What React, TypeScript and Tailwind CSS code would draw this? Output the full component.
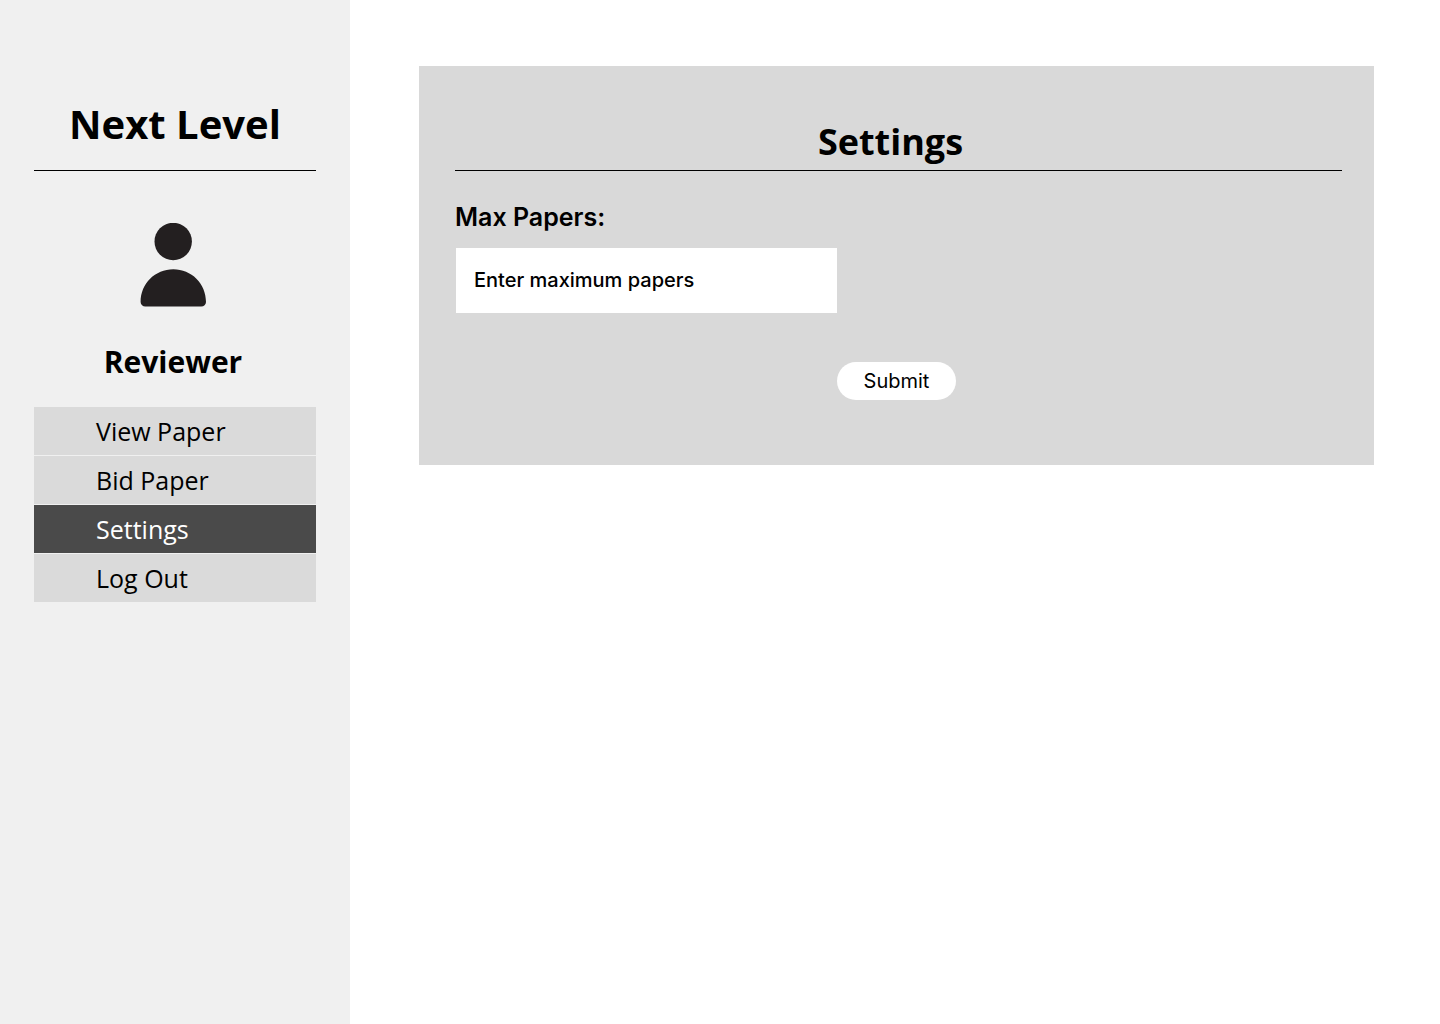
const navItems = ["View Paper", "Bid Paper", "Settings", "Log Out"];

function PersonIcon() {
  return (
    <svg className="h-[84px] w-[66px]" viewBox="0 0 66 84" aria-hidden="true">
      <circle cx="33.200" cy="18.500" r="18.700" fill="#231f20" />
      <path
        d="M0.600 79C0.600 60.500 15.200 46.200 33.300 46.200S66 60.500 66 79A4.700 4.700 0 0 1 61.300 83.600H5.300A4.700 4.700 0 0 1 0.600 79Z"
        fill="#231f20"
      />
    </svg>
  );
}

function Sidebar() {
  return (
    <aside className="w-[350px] shrink-0 bg-[#f0f0f0] px-[34px] pt-24 font-['Open_Sans',sans-serif] text-black">
      <div className="border-b border-black pb-[18px] text-center text-[40px] leading-14 font-bold">
        Next Level
      </div>
      <div className="mt-[52px] flex flex-col items-center pr-1">
        <PersonIcon />
        <h2 className="mt-[31px] text-[30px] leading-12 font-bold">Reviewer</h2>
      </div>
      <nav className="mt-[21px] flex flex-col gap-px">
        {navItems.map((item) => (
          <a
            key={item}
            href="#"
            aria-current={item === "Settings" ? "page" : undefined}
            className="flex h-12 items-center bg-[#dadada] pl-[62px] text-[25px] leading-8 aria-[current=page]:bg-[#4a4a4a] aria-[current=page]:text-white"
          >
            {item}
          </a>
        ))}
      </nav>
    </aside>
  );
}

export default function App() {
  return (
    <div className="flex min-h-screen bg-white">
      <Sidebar />
      <main className="min-w-0 flex-1 pt-[66px] pr-[66px] pl-[69px]">
        <form
          className="bg-[#d9d9d9] pt-[52px] pr-8 pb-[65px] pl-9 font-['Inter',sans-serif] text-black"
          onSubmit={(event) => event.preventDefault()}
        >
          <h1 className="border-b border-black pr-4 pb-1 text-center font-['Open_Sans',sans-serif] text-[36px] leading-12 font-bold">
            Settings
          </h1>
          <label htmlFor="max-papers" className="mt-[30px] block text-[25px] leading-8 font-semibold">
            Max Papers:
          </label>
          <input
            id="max-papers"
            type="text"
            placeholder="Enter maximum papers"
            className="mt-[15px] ml-px block h-[65px] w-[381px] max-w-full bg-white px-[18px] pb-0.5 text-[20px] font-medium placeholder:text-black"
          />
          <div className="mt-[49px] flex justify-center pr-1">
            <button type="submit" className="h-[38px] w-[119px] rounded-full bg-white text-[20px]">
              Submit
            </button>
          </div>
        </form>
      </main>
    </div>
  );
}
